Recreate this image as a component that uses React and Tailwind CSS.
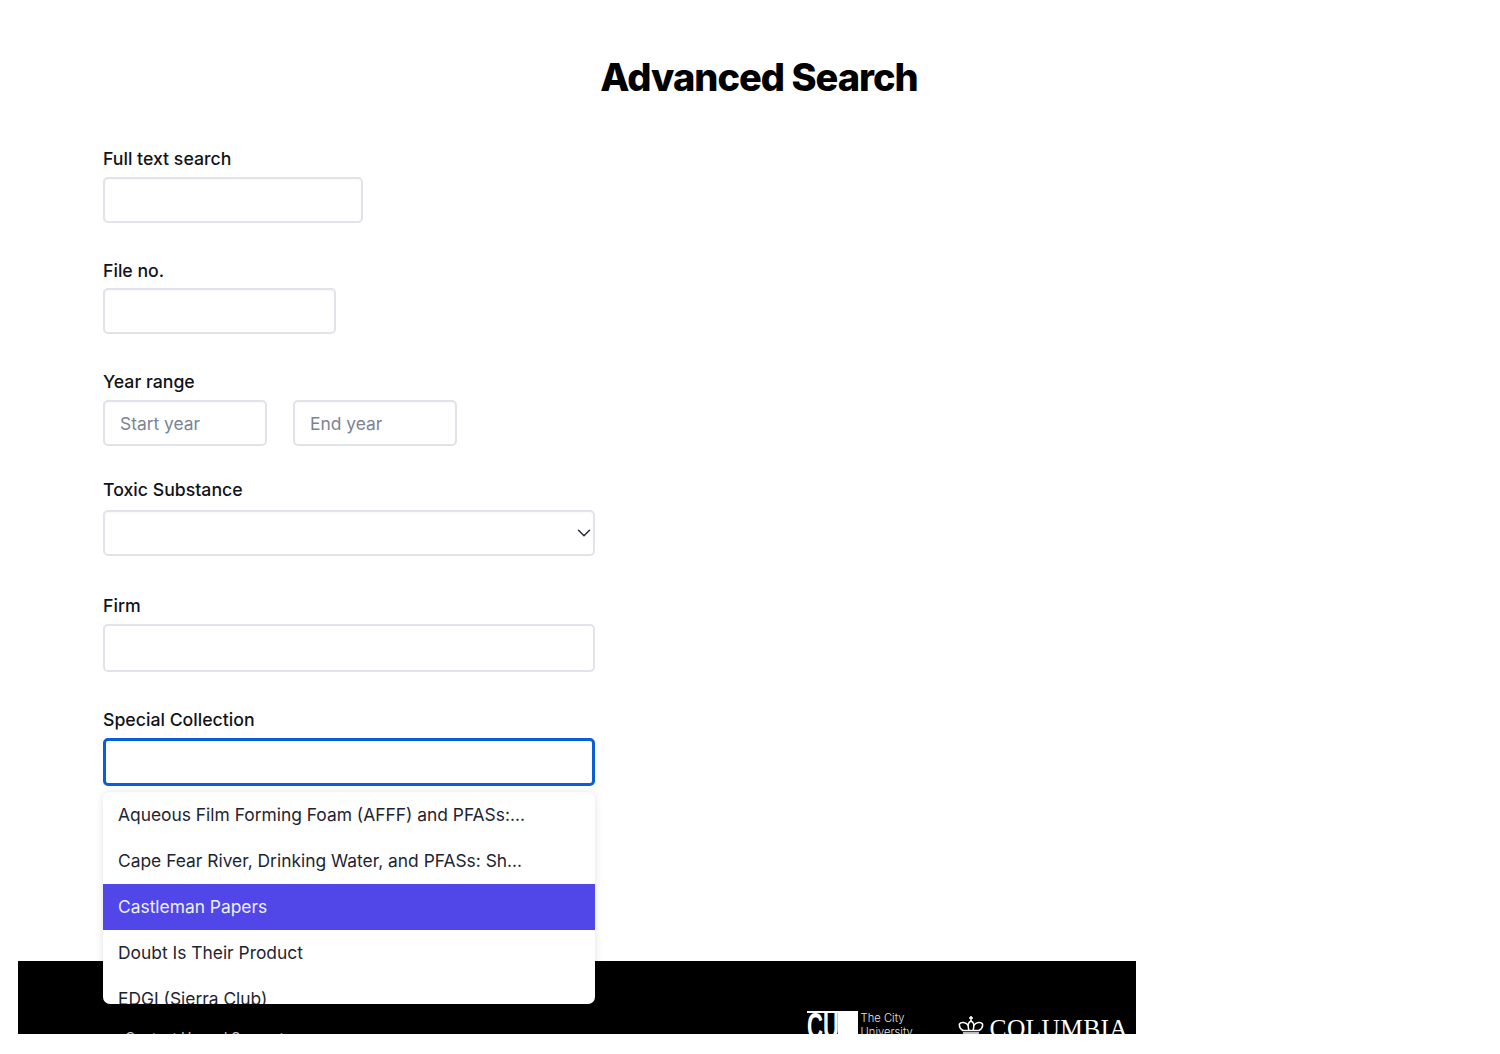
import { ChevronDown } from "lucide-react";

const fieldClass =
  "block rounded-[5px] bg-white px-[15px] text-[17.4px] text-gray-900 placeholder:text-[#7b8494] outline-none";
const inputClass = `${fieldClass} h-[46px] border-2 border-[#e2e3ea] shadow-[inset_0_1px_2px_rgba(0,0,0,0.03)]`;
const labelClass = "block text-[17.7px] leading-[24px] font-medium text-[#111318]";

const options = [
  "Aqueous Film Forming Foam (AFFF) and PFASs:...",
  "Cape Fear River, Drinking Water, and PFASs: Sh...",
  "Castleman Papers",
  "Doubt Is Their Product",
  "EDGI (Sierra Club)",
];

const Crown = () => (
  <svg width="26" height="18" viewBox="0 0 26 18" fill="none" stroke="white" strokeWidth="1.5">
    <path d="M13 0V5M11 2H15" />
    <path d="M5 14.500C2.500 13 1 10.500 1.500 8C3 5.500 8 6 10 9C10.500 7 11.500 5.500 13 5C14.500 5.500 15.500 7 16 9C18 6 23 5.500 24.500 8C25 10.500 23.500 13 21 14.500Z" />
    <path d="M10 9L10.800 14.500M16 9L15.200 14.500" />
    <path d="M5 17H21" />
  </svg>
);

export default function App() {
  return (
    <div className="h-[1034px] overflow-hidden bg-white pl-[18px] font-['Inter',sans-serif]">
      <h1 className="pt-[54px] text-center text-[38px] leading-[46px] font-extrabold tracking-[-1px] text-black">
        Advanced Search
      </h1>

      <form className="h-[861px] w-[1118px] pt-[47px] pl-[85px]">
        <label className={labelClass}>Full text search</label>
        <input className={`${inputClass} mt-[6px] w-[260px]`} />

        <label className={`${labelClass} mt-[36px]`}>File no.</label>
        <input className={`${inputClass} mt-[5px] w-[233px]`} />

        <label className={`${labelClass} mt-[36px]`}>Year range</label>
        <div className="mt-[6px] flex gap-[26px]">
          <input className={`${inputClass} w-[164px]`} placeholder="Start year" />
          <input className={`${inputClass} w-[164px]`} placeholder="End year" />
        </div>

        <label className={`${labelClass} mt-[32px]`}>Toxic Substance</label>
        <div className="relative mt-[8px] w-[492px]">
          <select className={`${inputClass} w-full appearance-none`} />
          <ChevronDown
            strokeWidth={1.6}
            className="absolute top-[12px] right-0 h-[22px] w-[22px] text-[#23272f]"
          />
        </div>

        <label className={`${labelClass} mt-[38px]`}>Firm</label>
        <input className={`${fieldClass} mt-[6px] h-[48px] w-[492px] border-2 border-[#e2e3ea]`} />

        <label className={`${labelClass} mt-[36px]`}>Special Collection</label>
        <div className="relative mt-[6px] w-[492px]">
          <input className={`${fieldClass} h-[48px] w-full border-[3px] border-[#0a5ed7]`} />
          <ul className="absolute top-[54px] left-0 z-10 h-[212px] w-full overflow-hidden rounded-[7px] bg-white shadow-[0_1px_8px_rgba(0,0,0,0.12)]">
            {options.map((o, i) => (
              <li
                key={o}
                className={`flex h-[46px] items-center px-[15px] text-[17.4px] whitespace-nowrap ${
                  i === 2 ? "bg-[#5146e8] text-[#eef0ff]" : "text-[#1e2532]"
                }`}
              >
                {o}
              </li>
            ))}
          </ul>
        </div>
      </form>

      <footer className="flex h-[200px] w-[1118px] justify-between bg-black pr-[8px]">
        <p className="pt-[67px] pl-[107px] text-[14px] leading-[20px] text-[#c9c9c9]">Contact Us and Support</p>
        <div className="flex items-start gap-[45px] pt-[50px] text-white">
          <div className="flex items-start">
            <div className="flex h-[40px] border-t-2 border-white">
              <span className="w-[31px] origin-left scale-x-[0.6] font-['Liberation_Sans',sans-serif] text-[37px] leading-[27px] font-bold whitespace-nowrap">
                CU
              </span>
              <span className="h-[40px] w-[20px] bg-white" />
            </div>
            <p className="ml-[3px] w-[52px] text-[11.2px] leading-[14px] font-light whitespace-nowrap text-[#e5e5e5]">
              The City
              <br />
              University
            </p>
          </div>
          <div className="flex items-start gap-[6px] pt-[5px]">
            <Crown />
            <span className="font-['Liberation_Serif',serif] text-[25.5px] leading-[26px] tracking-[0.3px]">COLUMBIA</span>
          </div>
        </div>
      </footer>
    </div>
  );
}
